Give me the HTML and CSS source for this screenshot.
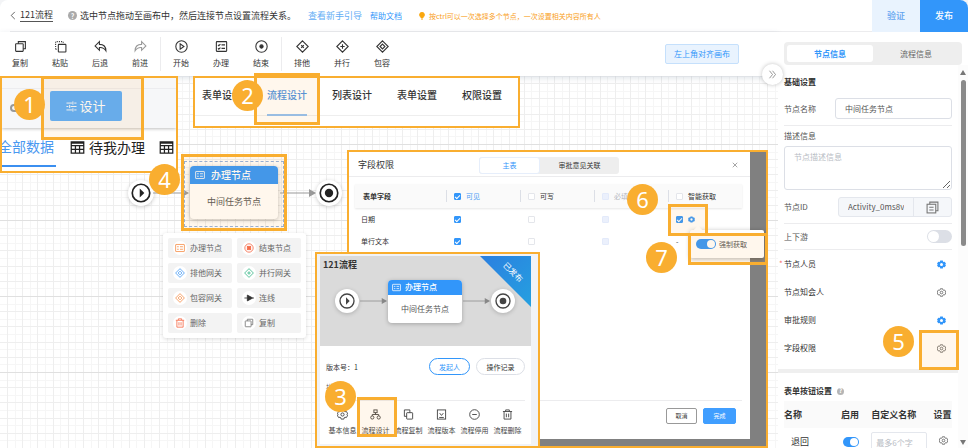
FILE: index.html
```html
<!DOCTYPE html>
<html lang="zh-CN">
<head>
<meta charset="utf-8">
<meta name="viewport" content="width=device-width, initial-scale=1">
<title>121流程</title>
<link rel="stylesheet" href="styles.css">
</head>
<body>
<svg class="sprite" aria-hidden="true">
  <symbol id="i-gear" viewBox="0 0 24 24"><path fill-rule="evenodd" d="M8.5 1.500h7l.9 3 1.200.7 3.100-.8 3.300 5.800L21.800 12l2.200 1.800-3.300 5.800-3.100-.8-1.200.7-.9 3h-7l-.9-3-1.200-.7-3.100.8L0 13.800 2.200 12 0 10.200l3.300-5.800 3.100.8 1.200-.7zM12 8a4 4 0 1 0 0 8 4 4 0 0 0 0-8z"/></symbol>
  <symbol id="i-gear-line" viewBox="0 0 24 24"><path d="M9 2h6l.9 3.200 1.500.9 3-.8 3 5L21.200 12l2.200 1.700-3 5-3-.8-1.500.9L15 22H9l-.9-3.200-1.500-.9-3 .8-3-5L2.800 12 .6 10.300l3-5 3 .8 1.500-.9z"/><circle cx="12" cy="12" r="3.500"/></symbol>
  <symbol id="i-copy" viewBox="0 0 24 24"><rect x="3" y="7" width="14" height="14" rx="1"/><path d="M8 7V3h13v13h-4"/></symbol>
  <symbol id="i-pages" viewBox="0 0 24 24"><rect x="8" y="8" width="13" height="14" rx="1"/><path d="M8 16H3V2h12v6"/></symbol>
  <symbol id="i-paste" viewBox="0 0 24 24"><rect x="8" y="8" width="14" height="14" rx="1"/><path stroke-dasharray="2 2" d="M3 17V3h14v2M3 17h3"/></symbol>
  <symbol id="i-undo" viewBox="0 0 24 24"><path d="M10 3 2 11l8 8v-5c6-.5 9 1 12 6 0-8-4-12-12-12z"/></symbol>
  <symbol id="i-redo" viewBox="0 0 24 24"><path d="m14 3 8 8-8 8v-5c-6-.5-9 1-12 6 0-8 4-12 12-12z"/></symbol>
  <symbol id="i-start" viewBox="0 0 24 24"><circle cx="12" cy="12" r="10.500"/><path d="M9.500 7v10l7-5z"/></symbol>
  <symbol id="i-task" viewBox="0 0 24 24"><rect x="2.500" y="3" width="19" height="18" rx="1"/><path d="m5.500 9 1.500 1.500L10 7.500M12 9h6.500M5.500 15.500 7 17l3-3M12 15.500h6.500"/></symbol>
  <symbol id="i-end" viewBox="0 0 24 24"><circle cx="12" cy="12" r="10.500"/><circle cx="12" cy="12" r="3" fill="currentColor"/></symbol>
  <symbol id="i-xor" viewBox="0 0 24 24"><path d="M12 1.500 22.500 12 12 22.500 1.500 12zM9.500 9.500l5 5m0-5-5 5"/></symbol>
  <symbol id="i-and" viewBox="0 0 24 24"><path d="M12 1.500 22.500 12 12 22.500 1.500 12zM12 8v8m-4-4h8"/></symbol>
  <symbol id="i-or" viewBox="0 0 24 24"><path d="M12 1.500 22.500 12 12 22.500 1.500 12zM12 7.500l4.500 4.500-4.500 4.500L7.500 12z"/></symbol>
  <symbol id="i-form" viewBox="0 0 24 24"><rect x="1.500" y="3.500" width="21" height="17" rx="1"/><path d="M5 9h4M5 15h4M12 9h7M12 15h7"/></symbol>
  <symbol id="i-stop" viewBox="0 0 24 24"><circle cx="12" cy="12" r="10"/><rect x="8" y="8" width="8" height="8" fill="currentColor"/></symbol>
  <symbol id="i-line" viewBox="0 0 24 24"><path d="M1 12h7M21 12h3"/><path fill="currentColor" d="M8 5v14l13-7z"/></symbol>
  <symbol id="i-trash" viewBox="0 0 24 24"><path d="M2 5.500h20M8 5V2h8v3M4.500 6v16h15V6M9.500 10v8M14.500 10v8"/></symbol>
  <symbol id="i-sliders" viewBox="0 0 24 24"><path d="M1 4.500h12M18 4.500h5M15 1v7M1 12h4M10 12h13M8 8.500v7M1 19.500h12M18 19.500h5M15 16v7"/></symbol>
  <symbol id="i-table" viewBox="0 0 24 24"><path d="M2 3h20v18H2zM2 9h20M2 15h20M8.700 9v12M15.300 9v12M2 5h20"/></symbol>
  <symbol id="i-flow" viewBox="0 0 24 24"><rect x="8.500" y="2" width="7" height="6"/><circle cx="5" cy="18.500" r="3.500"/><circle cx="19" cy="18.500" r="3.500"/><path d="M12 8v4M5 15v-3h14v3"/></symbol>
  <symbol id="i-version" viewBox="0 0 24 24"><rect x="3" y="2" width="18" height="20"/><path d="m8 9 4 5 4-5M7 18.500h10"/></symbol>
  <symbol id="i-minus" viewBox="0 0 24 24"><circle cx="12" cy="12" r="10.500"/><path d="M7 12h10"/></symbol>
  <symbol id="i-doc" viewBox="0 0 24 24"><rect x="2" y="6" width="16" height="16"/><path d="M7 6V2h15v16h-4M6 11.500h8M6 16.500h8"/></symbol>
  <symbol id="i-play" viewBox="0 0 24 24"><circle cx="12" cy="12" r="10.500"/><path class="solid" d="M10.500 6.500v11l5.500-5.500z"/></symbol>
  <symbol id="i-dot" viewBox="0 0 24 24"><circle cx="12" cy="12" r="10.500"/><circle class="solid" cx="12" cy="12" r="5"/></symbol>
  <symbol id="i-arrow" viewBox="0 0 36 8"><path d="M0 4h30"/><path class="solid" d="M29 0v8l7-4z"/></symbol>
</svg>

<div class="page">
  <header class="header">
    <div class="header-info">
      <a class="back" href="#"><svg viewBox="0 0 6 10"><path d="M5 1 1 5l4 4"/></svg><span>121流程</span></a>
      <span class="help">?</span>
      <span class="intro">选中节点拖动至画布中，然后连接节点设置流程关系。</span>
      <a class="guide-link" href="#">查看新手引导</a>
      <a class="doc-link" href="#">帮助文档</a>
      <span class="tip"><svg viewBox="0 0 12 16"><path d="M6 0a5.500 5.500 0 0 0-3 10.200V12h6v-1.800A5.500 5.500 0 0 0 6 0zM4 13h4v2H4z"/></svg>按ctrl可以一次选择多个节点，一次设置相关内容所有人</span>
    </div>
    <button class="verify" type="button">验证</button>
    <button class="publish" type="button">发布</button>
  </header>

  <div class="body">
    <main class="workspace">
      <div class="toolbar">
        <button type="button"><svg class="ico"><use href="#i-copy"/></svg>复制</button>
        <button type="button"><svg class="ico"><use href="#i-paste"/></svg>粘贴</button>
        <button type="button"><svg class="ico"><use href="#i-undo"/></svg>后退</button>
        <button type="button"><svg class="ico muted"><use href="#i-redo"/></svg>前进</button>
        <i class="sep"></i>
        <button type="button"><svg class="ico"><use href="#i-start"/></svg>开始</button>
        <button type="button"><svg class="ico"><use href="#i-task"/></svg>办理</button>
        <button type="button"><svg class="ico"><use href="#i-end"/></svg>结束</button>
        <i class="sep"></i>
        <button type="button"><svg class="ico"><use href="#i-xor"/></svg>排他</button>
        <button type="button"><svg class="ico"><use href="#i-and"/></svg>并行</button>
        <button type="button"><svg class="ico"><use href="#i-or"/></svg>包容</button>
        <button class="align" type="button">左上角对齐画布</button>
      </div>

      <div class="canvas">
        <svg class="grid" aria-hidden="true">
          <defs><pattern id="grid" width="76" height="76" y="68" x="7" patternUnits="userSpaceOnUse">
            <path class="g1" d="M0 8.500h76M0 23.500h76M0 38.500h76M0 53.500h76M0 68.500h76M8.500 0v76M23.500 0v76M38.500 0v76M53.500 0v76M68.500 0v76"/>
            <path class="g2" d="M0 15.500h76M0 30.500h76M0 46.500h76M0 61.500h76M.5 0v76M15.500 0v76M30.500 0v76M46.500 0v76M61.500 0v76"/>
            <path class="g3" d="M0 .5h76"/>
          </pattern></defs>
          <rect width="100%" height="100%" fill="url(#grid)"/>
        </svg>

        <div class="event event-start"><svg><use href="#i-play"/></svg></div>
        <svg class="edge edge-a"><use href="#i-arrow"/></svg>
        <div class="selection"></div>
        <div class="node node-main"><div class="node-head"><svg class="ico"><use href="#i-form"/></svg>办理节点</div><div class="node-body">中间任务节点</div></div>
        <svg class="edge edge-b"><use href="#i-arrow"/></svg>
        <div class="event event-end"><svg><use href="#i-dot"/></svg></div>

        <div class="palette">
          <button type="button"><span class="orange"><svg class="ico"><use href="#i-form"/></svg></span>办理节点</button>
          <button type="button"><span class="red"><svg class="ico"><use href="#i-stop"/></svg></span>结束节点</button>
          <button type="button"><span class="blue"><svg class="ico"><use href="#i-or"/></svg></span>排他网关</button>
          <button type="button"><span class="green"><svg class="ico"><use href="#i-and"/></svg></span>并行网关</button>
          <button type="button"><span class="orange"><svg class="ico"><use href="#i-or"/></svg></span>包容网关</button>
          <button type="button"><span class="dark"><svg class="ico"><use href="#i-line"/></svg></span>连线</button>
          <button type="button"><span class="red"><svg class="ico"><use href="#i-trash"/></svg></span>删除</button>
          <button type="button"><span class="gray"><svg class="ico"><use href="#i-copy"/></svg></span>复制</button>
        </div>
      </div>
    </main>

    <aside class="side">
      <div class="tabs"><button class="on" type="button">节点信息</button><button type="button">流程信息</button></div>
      <div class="side-scroll">
        <div class="side-content">
          <div class="pad">
            <h2>基础设置</h2>
            <div class="field name-field"><label for="name">节点名称</label><input id="name" value="中间任务节点"></div>
            <label class="block-label" for="desc">描述信息</label>
            <textarea id="desc" placeholder="节点描述信息"></textarea>
            <div class="field id-field"><label for="nid">节点ID</label><div class="id-box"><input id="nid" value="Activity_0ms8v9" readonly><button type="button" aria-label="复制"><svg class="ico"><use href="#i-doc"/></svg></button></div></div>
            <div class="field stream-field"><label for="stream">上下游</label><input class="switch" id="stream" type="checkbox"></div>
            <div class="setting required"><span>节点人员</span><button type="button" aria-label="设置"><svg class="gear on"><use href="#i-gear"/></svg></button></div>
            <div class="setting"><span>节点知会人</span><button type="button" aria-label="设置"><svg class="gear"><use href="#i-gear-line"/></svg></button></div>
            <div class="setting"><span>审批规则</span><button type="button" aria-label="设置"><svg class="gear on"><use href="#i-gear"/></svg></button></div>
            <div class="setting"><span>字段权限</span><button type="button" aria-label="设置"><svg class="gear"><use href="#i-gear-line"/></svg></button></div>
          </div>
          <div class="band"></div>
          <div class="pad">
            <h2 class="form-title">表单按钮设置 <span class="help">?</span></h2>
            <table class="btn-table">
              <thead><tr><th class="c1">名称</th><th class="c2">启用</th><th class="c3">自定义名称</th><th class="c4">设置</th></tr></thead>
              <tbody><tr><td class="c1">退回</td><td class="c2"><input class="switch small" type="checkbox" checked aria-label="启用"></td><td class="c3"><input class="custom" placeholder="最多6个字" aria-label="自定义名称"></td><td class="c4"><button type="button" aria-label="设置"><svg class="gear"><use href="#i-gear-line"/></svg></button></td></tr></tbody>
            </table>
          </div>
        </div>
        <div class="bar"><i class="up"></i><i class="thumb"></i><i class="down"></i></div>
      </div>
    </aside>
  </div>

  <button class="collapse" type="button" aria-label="收起"><svg viewBox="0 0 12 12"><path d="m2 1 4 5-4 5M6 1l4 5-4 5"/></svg></button>

  <section class="shot shot-design">
    <div class="design-top"><i class="ring"></i><button type="button"><svg class="ico"><use href="#i-sliders"/></svg>设计</button></div>
    <nav class="data-tabs"><a class="on" href="#">全部数据</a><a href="#"><svg class="ico"><use href="#i-table"/></svg>待我办理</a><a href="#"><svg class="ico"><use href="#i-table"/></svg></a></nav>
  </section>
  <div class="mark mark-1"></div>

  <nav class="shot shot-tabs"><a href="#">表单设计</a><a class="on" href="#">流程设计</a><a href="#">列表设计</a><a href="#">表单设置</a><a href="#">权限设置</a></nav>
  <div class="mark mark-2"></div>
  <div class="mark mark-4"></div>

  <section class="shot shot-perm">
    <div class="dialog">
      <div class="dialog-head"><h3>字段权限</h3><div class="seg"><button class="on" type="button">主表</button><button type="button">审批意见关联</button></div><button class="close" type="button" aria-label="关闭"><svg viewBox="0 0 8 8"><path d="m1 1 6 6M7 1 1 7"/></svg></button></div>
      <table class="perm">
        <thead><tr><th class="first">表单字段</th><th><label class="blue"><input type="checkbox" checked>可见</label></th><th><label><input type="checkbox">可写</label></th><th><label class="off"><input type="checkbox" disabled>必填</label></th><th><label><input type="checkbox">智能获取</label></th></tr></thead>
        <tbody>
          <tr><td class="first">日期</td><td><input type="checkbox" checked aria-label="可见"></td><td><input type="checkbox" aria-label="可写"></td><td><input type="checkbox" disabled aria-label="必填"></td><td><div class="fetch"><input type="checkbox" checked aria-label="智能获取"><svg class="gear on"><use href="#i-gear"/></svg></div></td></tr>
          <tr><td class="first">单行文本</td><td><input type="checkbox" checked aria-label="可见"></td><td><input type="checkbox" aria-label="可写"></td><td><input type="checkbox" disabled aria-label="必填"></td><td>-</td></tr>
        </tbody>
      </table>
      <div class="dialog-foot"><button type="button">取消</button><button class="ok" type="button">完成</button></div>
    </div>
  </section>
  <div class="popover"><label><input class="switch" type="checkbox" checked>强制获取</label></div>
  <div class="mark mark-6"></div>
  <div class="mark mark-7"></div>

  <section class="shot shot-card">
    <article class="card">
      <div class="preview">
        <h3>121流程</h3>
        <div class="event"><svg><use href="#i-play"/></svg></div>
        <svg class="link"><use href="#i-arrow"/></svg>
        <div class="node"><div class="node-head"><svg class="ico"><use href="#i-form"/></svg>办理节点</div><div class="node-body">中间任务节点</div></div>
        <svg class="link"><use href="#i-arrow"/></svg>
        <div class="event"><svg><use href="#i-dot"/></svg></div>
        <div class="ribbon"><span>已发布</span></div>
      </div>
      <div class="card-row"><span>版本号：1</span><button class="primary" type="button">发起人</button><button type="button">操作记录</button></div>
      <div class="card-desc">描述：</div>
      <div class="card-actions">
        <button type="button"><svg class="ico"><use href="#i-gear-line"/></svg>基本信息</button>
        <button type="button"><svg class="ico"><use href="#i-flow"/></svg>流程设计</button>
        <button type="button"><svg class="ico"><use href="#i-pages"/></svg>流程复制</button>
        <button type="button"><svg class="ico"><use href="#i-version"/></svg>流程版本</button>
        <button type="button"><svg class="ico"><use href="#i-minus"/></svg>流程停用</button>
        <button type="button"><svg class="ico"><use href="#i-trash"/></svg>流程删除</button>
      </div>
    </article>
  </section>
  <div class="mark mark-3"></div>
  <div class="mark mark-5"></div>

  <span class="num num-1">1</span>
  <span class="num num-2">2</span>
  <span class="num num-3">3</span>
  <span class="num num-4">4</span>
  <span class="num num-5">5</span>
  <span class="num num-6">6</span>
  <span class="num num-7">7</span>
</div>
</body>
</html>
```
FILE: styles.css
```css
:root {
  --blue: #3296fa;
  --orange: #f9ae30;
  --text: #333;
  --line: #ececee;
}
* { box-sizing: border-box; }
body {
  margin: 0;
  background: #f3f4f6;
  color: var(--text);
  font: 8px/12px "Noto Sans CJK SC", "Noto Sans", sans-serif;
}
button, input, textarea { font: inherit; color: inherit; margin: 0; padding: 0; border: 0; background: none; }
input, textarea { min-width: 0; outline: 0; }
a { color: inherit; text-decoration: none; }
h2, h3 { margin: 0; font-size: 8px; }
table { border-collapse: collapse; }
th, td { padding: 0; text-align: left; }
.sprite { position: absolute; width: 0; height: 0; }
.ico { width: 12px; height: 12px; flex: none; fill: none; stroke: currentColor; stroke-width: 2; }
.gear { display: block; width: 9px; height: 9px; fill: none; stroke: #555; stroke-width: 2; }
.gear.on { fill: var(--blue); stroke: none; }
.solid { fill: currentColor; stroke: none; }

.page { position: relative; display: flex; flex-direction: column; height: 100vh; overflow: hidden; border-radius: 8px 8px 0 0; background: #fff; }

/* header */
.header { display: flex; height: 32px; flex: none; }
.header-info { flex: 1; display: flex; align-items: center; margin-left: 10px; border-bottom: 1px solid var(--line); font-size: 9px; white-space: nowrap; }
.back { display: flex; align-items: center; gap: 4px; margin-right: 15px; }
.back svg { width: 6px; height: 9px; fill: none; stroke: #555; }
.back span { border-bottom: 1px solid #555; }
.help { display: inline-flex; align-items: center; justify-content: center; width: 9px; height: 9px; border-radius: 50%; background: #aaa; color: #fff; font-size: 7px; font-weight: 700; }
.intro { margin-left: 3px; }
.guide-link { margin-left: 12px; color: #62adf5; }
.doc-link { margin-left: 8px; color: var(--blue); font-size: 8px; }
.tip { display: flex; align-items: center; gap: 4px; margin-left: 17px; color: #f9a01b; font-size: 7px; }
.tip svg { width: 6px; height: 8px; fill: #faa70d; }
.verify, .publish { width: 48px; font-size: 9px; font-weight: 500; }
.verify { background: #e9f3fe; color: #62a4f0; }
.publish { background: var(--blue); color: #fff; }

.body { flex: 1; display: flex; min-height: 0; }
.workspace { flex: 1; display: flex; flex-direction: column; min-width: 0; }

/* toolbar */
.toolbar { display: flex; align-items: center; height: 44px; flex: none; padding-right: 39px; background: #fff; box-shadow: 0 2px 6px rgba(50, 80, 110, .16); z-index: 1; }
.toolbar button { display: flex; flex-direction: column; align-items: center; gap: 4px; width: 40px; }
.toolbar .ico { width: 13px; height: 13px; }
.toolbar .muted { color: #999; }
.sep { width: 1px; height: 34px; background: var(--line); }
.toolbar .align { display: block; width: 74px; height: 20px; margin-left: auto; border: 1px solid #c5e0fc; border-radius: 2px; background: #e9f3fe; color: var(--blue); }

/* canvas */
.canvas { flex: 1; position: relative; overflow: hidden; }
.grid { display: block; width: 100%; height: 100%; }
.grid path { fill: none; }
.g1 { stroke: #f6f6f6; }
.g2 { stroke: #eee; }
.g3 { stroke: #e0e0e0; }
.event { display: flex; align-items: center; justify-content: center; width: 26px; height: 26px; border-radius: 50%; background: #fff; box-shadow: 0 1px 4px rgba(0, 0, 0, .2); color: #222; }
.event svg { width: 20px; height: 20px; fill: none; stroke: currentColor; stroke-width: 2; }
.canvas .event { position: absolute; top: 104px; }
.event-start { left: 128px; }
.event-end { left: 316px; }
.edge { position: absolute; top: 113px; width: 36px; height: 8px; fill: none; stroke: #999; color: #999; }
.edge-a { left: 153px; }
.edge-b { left: 280px; }
.selection { position: absolute; left: 184px; top: 85px; width: 100px; height: 66px; border: 1px dashed #8fb0e0; }
.node { border-radius: 4px; background: #fff; box-shadow: 0 1px 4px rgba(0, 0, 0, .25); overflow: hidden; white-space: nowrap; }
.node-head { display: flex; align-items: center; background: var(--blue); color: #fff; font-weight: 500; }
.node-body { display: flex; align-items: center; justify-content: center; color: #555; }
.node-main { position: absolute; left: 190px; top: 90px; width: 88px; font-size: 9px; }
.node-main .node-head { height: 18px; gap: 6px; padding-left: 5px; font-size: 10px; }
.node-main .ico { width: 10px; height: 10px; }
.node-main .node-body { height: 35px; }
.palette { position: absolute; left: 163px; top: 157px; width: 143px; display: grid; grid-template-columns: 1fr 1fr; gap: 5px; padding: 5px; border-radius: 3px; background: #fff; box-shadow: 0 1px 4px rgba(0, 0, 0, .15); }
.palette button { display: flex; align-items: center; gap: 3px; height: 20px; padding-left: 5px; border-radius: 2px; background: #f3f3f3; color: #666; }
.palette span { display: flex; align-items: center; justify-content: center; width: 14px; height: 14px; border-radius: 50%; background: #fff; }
.palette .ico { width: 10px; height: 10px; }
.orange { color: #f5924d; }
.red { color: #f56c4a; }
.blue { color: #4a9df5; }
.green { color: #3cb88a; }
.dark { color: #333; }
.gray { color: #777; }

/* side panel */
.side { display: flex; flex-direction: column; width: 190px; flex: none; background: #fff; z-index: 1; }
.tabs { display: flex; flex: none; margin: 10px 6px 0; padding: 3px; border-radius: 4px; background: #eee; }
.tabs button { flex: 1; height: 17px; color: #666; }
.tabs .on { border-radius: 3px; background: #fff; color: var(--blue); font-weight: 700; }
.side-scroll { flex: 1; display: flex; min-height: 0; }
.side-content { flex: 1; overflow: hidden; min-width: 0; }
.pad { padding: 0 6px; }
.side h2 { display: flex; align-items: center; gap: 5px; height: 33px; }
.side .form-title { height: 28px; padding-top: 8px; }
.side .help { width: 7px; height: 7px; font-size: 6px; background: #b5b5b5; }
.field { display: flex; align-items: center; justify-content: space-between; border-bottom: 1px solid var(--line); color: #555; }
.name-field { padding-bottom: 6px; }
.name-field input { width: 117px; height: 21px; padding: 0 9px; border: 1px solid #dcdfe6; border-radius: 3px; }
.block-label { display: block; padding: 4px 0; color: #555; }
textarea { display: block; width: 100%; height: 44px; padding: 4px 9px; border: 1px solid #dcdfe6; border-radius: 3px; resize: vertical; }
::placeholder { color: #b8bcc4; opacity: 1; }
.id-field { padding: 7px 0 6px; }
.id-box { display: flex; width: 114px; height: 20px; border: 1px solid #e4e7ed; border-radius: 3px; background: #f5f7fa; }
.id-box input { flex: 1; margin-left: 9px; margin-right: 9px; }
.id-box button { display: flex; align-items: center; justify-content: center; width: 38px; border-left: 1px solid #e4e7ed; color: #777; }
.id-box .ico { width: 13px; height: 13px; }
.stream-field { height: 26px; }
.switch { appearance: none; width: 25px; height: 13px; flex: none; padding: 1px; border-radius: 7px; background: #dcdfe6; }
.switch::before { content: ""; display: block; width: 11px; height: 11px; border-radius: 50%; background: #fff; }
.switch:checked { background: var(--blue); }
.switch:checked::before { margin-left: auto; }
.switch.small { display: block; width: 16px; height: 10px; }
.switch.small::before { width: 8px; height: 8px; }
.setting { position: relative; display: flex; align-items: center; justify-content: space-between; height: 28px; padding-right: 6px; }
.required::before { content: "*"; position: absolute; left: -5px; color: #f56c6c; }
.band { height: 4px; margin-top: 7px; background: #efefef; }
.btn-table { width: 100%; table-layout: fixed; font-size: 9px; }
.btn-table th { height: 27px; background: #fafafa; white-space: nowrap; }
.btn-table td { height: 28px; }
.btn-table .c1 { width: 34%; }
.btn-table .c2 { width: 18%; }
.btn-table .c4 { width: 11%; }
.btn-table td.c1 { padding-left: 7px; }
.btn-table td.c2 { padding-left: 2px; }
.btn-table td.c4 { padding-left: 5px; }
.custom { display: block; width: 56px; height: 20px; padding: 0 4px; border: 1px solid #e4e7ed; border-radius: 2px; font-size: 8px; }
.bar { display: flex; flex-direction: column; align-items: center; width: 10px; padding: 5px 0 3px; background: #fcfcfc; }
.thumb { width: 5px; height: 166px; margin-top: 5px; border-radius: 3px; background: #8a8a8a; }
.up, .down { border: 3px solid transparent; }
.up { border-top: 0; border-bottom: 5px solid #777; }
.down { margin-top: auto; border-bottom: 0; border-top: 5px solid #777; }
.collapse { position: absolute; right: 185px; top: 64px; z-index: 2; display: flex; align-items: center; justify-content: center; width: 21px; height: 21px; border-radius: 50%; background: #fff; box-shadow: 0 0 4px rgba(0, 0, 0, .25); }
.collapse svg { width: 9px; height: 9px; fill: none; stroke: #777; }

/* annotation layer over the canvas */
.shot, .mark, .num, .popover { z-index: 2; }
.shot { position: absolute; border: 2px solid var(--orange); background: #fff; overflow: hidden; white-space: nowrap; }
.mark { position: absolute; border: 3px solid var(--orange); background: rgba(250, 170, 50, .09); pointer-events: none; }
.num { position: absolute; display: flex; align-items: center; justify-content: center; width: 31px; height: 31px; border-radius: 50%; background: var(--orange); color: #fff; font: 22px/31px "Noto Sans", sans-serif; }
.mark-1 { left: 41px; top: 76px; width: 103px; height: 64px; }
.mark-2 { left: 254px; top: 73px; width: 66px; height: 52px; }
.mark-3 { left: 357px; top: 397px; width: 40px; height: 40px; }
.mark-4 { left: 181px; top: 154px; width: 106px; height: 77px; }
.mark-5 { left: 919px; top: 330px; width: 40px; height: 40px; }
.mark-6 { left: 668px; top: 204px; width: 40px; height: 32px; }
.mark-7 { left: 688px; top: 233px; width: 80px; height: 32px; }
.num-1 { left: 14px; top: 89px; }
.num-2 { left: 232px; top: 80px; }
.num-3 { left: 325px; top: 381px; }
.num-4 { left: 149px; top: 164px; }
.num-5 { left: 883px; top: 326px; }
.num-6 { left: 627px; top: 184px; }
.num-7 { left: 646px; top: 242px; }

/* design button close-up */
.shot-design { left: 0; top: 76px; width: 178px; height: 97px; }
.design-top { display: flex; align-items: center; height: 50px; padding: 10px 0 0 8px; background: linear-gradient(#f7f7f8 10px, #ececef 10px, #ececef 11px, #f6f7f9 11px); box-shadow: 0 1px 3px rgba(0, 0, 0, .25); }
.ring { width: 12px; height: 8px; border: 2px solid #999; border-radius: 5px; }
.design-top button { display: flex; align-items: center; justify-content: center; gap: 2px; width: 72px; height: 30px; margin-left: 28px; margin-bottom: 4px; border-radius: 2px; background: #5aadfc; color: #fff; font-size: 13px; }
.design-top .ico { width: 11px; height: 11px; }
.data-tabs { display: flex; align-items: stretch; gap: 14px; height: 39px; margin-left: -2px; font-size: 14px; color: #222; }
.data-tabs a { display: flex; align-items: center; gap: 4px; padding-bottom: 1px; }
.data-tabs .on { justify-content: flex-end; width: 56px; padding-right: 2px; border-bottom: 2px solid #3b8ff0; color: #4a98f0; }
.data-tabs .ico { width: 15px; height: 15px; }

/* design tabs close-up */
.shot-tabs { left: 193px; top: 76px; width: 327px; height: 52px; display: flex; align-items: flex-start; gap: 25px; padding-left: 7px; font-size: 10px; font-weight: 500; background: linear-gradient(#fff 37px, #eee 37px, #eee 38px, #fff 38px); }
.shot-tabs a { height: 38px; padding-top: 11px; }
.shot-tabs .on { color: #4a90e2; border-bottom: 2px solid #8fc0f3; }

/* permission dialog */
.shot-perm { left: 347px; top: 150px; width: 421px; height: 298px; background: #808080; font-size: 7px; }
.dialog { display: flex; flex-direction: column; width: 401px; height: 287px; background: #fff; }
.dialog-head { display: grid; grid-template-columns: 130px 140px 1fr; align-items: center; height: 25px; padding: 2px 8px 0 0; border-bottom: 1px solid var(--line); }
.dialog-head h3 { padding-left: 9px; font-size: 9px; font-weight: 400; }
.seg { display: flex; height: 17px; border-radius: 3px; background: #eee; }
.seg button { flex: 4; }
.seg .on { flex: 3; border: 1px solid #e6eefb; border-radius: 3px; background: #fff; color: var(--blue); }
.close { justify-self: end; padding: 4px; }
.close svg { display: block; width: 6px; height: 6px; fill: none; stroke: #888; }
.perm { width: 387px; margin: 7px 6px 0; table-layout: fixed; }
.perm th { height: 24px; background: linear-gradient(#dcdfe6, #dcdfe6) left center / 1px 12px no-repeat #fafafa; padding-left: 8px; font-weight: 400; }
.perm th.first { width: 91px; background: #fafafa; font-weight: 700; }
.perm thead { box-shadow: 0 1px 2px rgba(0, 0, 0, .1); }
.perm td { height: 22px; padding-left: 8px; }
.perm td.first { padding-left: 6px; }
.perm label { display: flex; align-items: center; gap: 5px; }
.perm .off { color: #b5b8bf; }
.perm input { appearance: none; display: block; width: 7px; height: 7px; border: 1px solid #e4e6eb; border-radius: 1px; background: #fff; }
.perm input:disabled { border-color: #e3eafa; background: #ebf0fc; }
.perm input:checked { border-color: var(--blue); background: var(--blue); }
.perm input:checked::before { content: ""; display: block; width: 4px; height: 2px; margin-top: 1px; border: solid #fff; border-width: 0 0 1px 1px; transform: rotate(-45deg); }
.fetch { display: flex; align-items: center; gap: 5px; }
.fetch .gear { width: 7px; height: 7px; }
.dialog-foot { display: flex; justify-content: flex-end; gap: 6px; margin: auto 8px 0; padding: 7px 6px 15px 0; border-top: 1px solid var(--line); }
.dialog-foot button { width: 31px; height: 16px; border: 1px solid #999; border-radius: 2px; font-size: 6px; }
.dialog-foot .ok { width: 33px; border-color: #409eff; background: #409eff; color: #fff; }
.popover { position: absolute; left: 690px; top: 230px; width: 74px; height: 28px; padding: 8px 6px; border-radius: 2px; background: #fff; box-shadow: 0 1px 5px rgba(0, 0, 0, .3); font-size: 7px; }
.popover::before { content: ""; position: absolute; left: 5px; top: -3px; width: 6px; height: 6px; background: #fff; transform: rotate(45deg); }
.popover label { display: flex; align-items: center; gap: 3px; color: #555; white-space: nowrap; }
.popover .switch { width: 20px; height: 10px; }
.popover .switch::before { width: 8px; height: 8px; }

/* process card */
.shot-card { left: 315px; top: 252px; width: 225px; height: 196px; background: #f1f3f7; font-size: 7px; }
.card { width: 211px; height: 188px; margin: 2px 0 0 3px; background: #fff; }
.preview { position: relative; display: flex; align-items: center; height: 90px; padding-left: 15px; background: #dadada; }
.preview h3 { position: absolute; left: 3px; top: 3px; font-size: 9px; }
.preview .event { width: 24px; height: 24px; flex: none; }
.preview .event svg { width: 16px; height: 16px; color: #444; }
.link { width: 29px; height: 6px; flex: none; fill: none; stroke: #888; color: #888; }
.preview .node { width: 74px; flex: none; font-size: 8px; }
.preview .node-head { height: 15px; gap: 4px; padding-left: 4px; }
.preview .ico { width: 9px; height: 9px; }
.preview .node-body { height: 28px; }
.ribbon { position: absolute; right: 0; top: 0; width: 51px; height: 51px; background: linear-gradient(135deg, #2b7fe0, #25a0e0); clip-path: polygon(0 0, 100% 0, 100% 100%); }
.ribbon span { position: absolute; left: 21px; top: 10px; color: #fff; font-size: 8px; transform: rotate(45deg); }
.card-row { display: flex; align-items: center; gap: 6px; padding: 12px 6px 0; }
.card-row span { flex: 1; }
.card-row button { width: 49px; height: 17px; border: 1px solid #dcdfe6; border-radius: 9px; }
.card-row .primary { width: 41px; border-color: var(--blue); color: var(--blue); }
.card-desc { margin: 0 6px; padding: 6px 0 7px; border-bottom: 1px solid var(--line); color: #777; }
.card-actions { display: grid; grid-template-columns: repeat(6, 1fr); padding: 8px 7px 0 6px; }
.card-actions button { display: flex; flex-direction: column; align-items: center; gap: 4px; color: #444; }
.card-actions .ico { width: 11px; height: 11px; }
```
